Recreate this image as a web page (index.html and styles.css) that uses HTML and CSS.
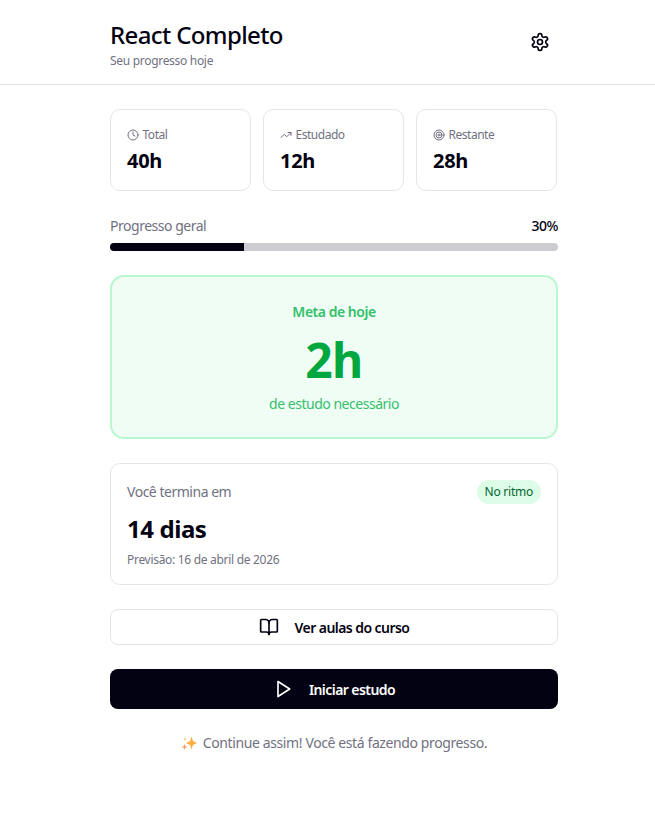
FILE: index.html
```html
<!DOCTYPE html>
<html lang="pt-BR">
<head>
    <title>React Completo</title>
    <meta name="viewport" content="width=device-width, initial-scale=1.0">
    <link rel="stylesheet" href="styles.css">
</head>
<body>
    <header class="header">
        <div class="header-inner">
            <div>
                <h1>React Completo</h1>
                <p class="subtitle">Seu progresso hoje</p>
            </div>
            <button class="icon-btn" aria-label="Configurações">
                <svg width="20" height="20" viewBox="0 0 24 24" class="icon">
                    <path d="M12.22 2h-.44a2 2 0 0 0-2 2v.18a2 2 0 0 1-1 1.73l-.43.25a2 2 0 0 1-2 0l-.15-.08a2 2 0 0 0-2.73.73l-.22.38a2 2 0 0 0 .73 2.73l.15.1a2 2 0 0 1 1 1.72v.51a2 2 0 0 1-1 1.74l-.15.09a2 2 0 0 0-.73 2.73l.22.38a2 2 0 0 0 2.73.73l.15-.08a2 2 0 0 1 2 0l.43.25a2 2 0 0 1 1 1.73V20a2 2 0 0 0 2 2h.44a2 2 0 0 0 2-2v-.18a2 2 0 0 1 1-1.73l.43-.25a2 2 0 0 1 2 0l.15.08a2 2 0 0 0 2.73-.73l.22-.39a2 2 0 0 0-.73-2.73l-.15-.08a2 2 0 0 1-1-1.74v-.5a2 2 0 0 1 1-1.74l.15-.09a2 2 0 0 0 .73-2.73l-.22-.38a2 2 0 0 0-2.73-.73l-.15.08a2 2 0 0 1-2 0l-.43-.25a2 2 0 0 1-1-1.73V4a2 2 0 0 0-2-2z"/>
                    <circle cx="12" cy="12" r="3"/>
                </svg>
            </button>
        </div>
    </header>

    <main class="container">
        <div class="stats">
            <div class="card stat">
                <div class="stat-label">
                    <svg width="12" height="12" viewBox="0 0 24 24" class="icon">
                        <circle cx="12" cy="12" r="10"/>
                        <path d="M12 6v6l4 2"/>
                    </svg>
                    <span>Total</span>
                </div>
                <div class="stat-value">40h</div>
            </div>
            <div class="card stat">
                <div class="stat-label">
                    <svg width="12" height="12" viewBox="0 0 24 24" class="icon">
                        <path d="M22 7l-8.500 8.500-5-5L2 17"/>
                        <path d="M16 7h6v6"/>
                    </svg>
                    <span>Estudado</span>
                </div>
                <div class="stat-value">12h</div>
            </div>
            <div class="card stat">
                <div class="stat-label">
                    <svg width="12" height="12" viewBox="0 0 24 24" class="icon">
                        <circle cx="12" cy="12" r="10"/>
                        <circle cx="12" cy="12" r="6"/>
                        <circle cx="12" cy="12" r="2"/>
                    </svg>
                    <span>Restante</span>
                </div>
                <div class="stat-value">28h</div>
            </div>
        </div>

        <section class="progress">
            <div class="progress-head">
                <span class="progress-label">Progresso geral</span>
                <span class="progress-value">30%</span>
            </div>
            <div class="bar"><div class="bar-fill" style="width: 30%"></div></div>
        </section>

        <section class="goal">
            <p class="goal-title">Meta de hoje</p>
            <p class="goal-value">2h</p>
            <p class="goal-note">de estudo necessário</p>
        </section>

        <section class="card finish">
            <div class="finish-head">
                <span class="finish-label">Você termina em</span>
                <span class="badge">No ritmo</span>
            </div>
            <div class="finish-value">14 dias</div>
            <p class="finish-date">Previsão: 16 de abril de 2026</p>
        </section>

        <button class="btn btn-outline">
            <svg width="20" height="20" viewBox="0 0 24 24" class="icon">
                <path d="M12 7v14"/>
                <path d="M3 18a1 1 0 0 1-1-1V4a1 1 0 0 1 1-1h5a4 4 0 0 1 4 4 4 4 0 0 1 4-4h5a1 1 0 0 1 1 1v13a1 1 0 0 1-1 1h-6a3 3 0 0 0-3 3 3 3 0 0 0-3-3z"/>
            </svg>
            <span>Ver aulas do curso</span>
        </button>

        <button class="btn btn-dark">
            <svg width="20" height="20" viewBox="0 0 24 24" class="icon">
                <path d="M6 3l14 9-14 9z"/>
            </svg>
            <span>Iniciar estudo</span>
        </button>

        <p class="footer-note">
            <svg width="16" height="16" viewBox="0 0 16 16" class="sparkle">
                <path fill="#fbb040" d="M10.500 1.500l1.500 4.500 4 2-4 2-1.500 4.500-1.500-4.500-4-2 4-2z"/>
                <path fill="#f79a5e" d="M3.500 9l.8 2.200 2.200.8-2.200.8-.8 2.200-.8-2.200-2.200-.8 2.200-.8z"/>
                <path fill="#fbc57a" d="M4 2l.6 1.400 1.400.6-1.400.6-.6 1.400-.6-1.400-1.400-.6 1.400-.6z"/>
            </svg>
            <span>Continue assim! Você está fazendo progresso.</span>
        </p>
    </main>
</body>
</html>
```

FILE: styles.css
```css
* {
    box-sizing: border-box;
}

body {
    font-family: "Noto Sans", sans-serif;
    margin: 0;
    background: #fff;
    color: #030213;
    letter-spacing: -0.03em;
}

p,
h1 {
    margin: 0;
}

.icon {
    fill: none;
    stroke: currentColor;
    stroke-width: 2;
    stroke-linecap: round;
    stroke-linejoin: round;
    flex-shrink: 0;
}

.header {
    height: 85px;
    padding-top: 17px;
    border-bottom: 1px solid #e5e5e5;
}

.header-inner {
    display: flex;
    justify-content: space-between;
    align-items: center;
    width: 448px;
    margin-left: 110px;
}

h1 {
    font-size: 24px;
    line-height: 36px;
    font-weight: 500;
    letter-spacing: -0.026em;
}

.subtitle {
    font-size: 12px;
    line-height: 16px;
    letter-spacing: -0.025em;
    color: #717182;
}

.icon-btn {
    display: flex;
    align-items: center;
    justify-content: center;
    width: 36px;
    height: 36px;
    padding: 0;
    border: none;
    background: none;
    color: #030213;
    position: relative;
    top: -1px;
}

.container {
    width: 448px;
    margin-left: 110px;
    padding-top: 24px;
}

.card {
    background: #fff;
    border: 1px solid #e5e5e5;
    border-radius: 10px;
}

.stats {
    display: grid;
    grid-template-columns: repeat(3, 141px);
    gap: 12px;
    margin-bottom: 24px;
}

.stat {
    height: 82px;
    padding: 16px;
}

.stat-label {
    display: flex;
    align-items: center;
    gap: 3.500px;
    font-size: 12px;
    line-height: 18px;
    color: #717182;
}

.stat-value {
    margin-top: 3px;
    font-size: 20px;
    line-height: 28px;
    font-weight: 700;
    letter-spacing: -0.015em;
}

.progress {
    margin-bottom: 24px;
}

.progress-head {
    display: flex;
    justify-content: space-between;
    align-items: center;
    padding-top: 1px;
    font-size: 14px;
    line-height: 20px;
    margin-bottom: 7px;
}

.progress-label {
    color: #717182;
}

.progress-value {
    font-weight: 500;
}

.bar {
    height: 8px;
    border-radius: 999px;
    background: #cbcbd0;
    overflow: hidden;
}

.bar-fill {
    height: 100%;
    background: #030213;
}

.goal {
    height: 164px;
    padding: 23px 24px;
    margin-bottom: 24px;
    background: #f0fdf4;
    border: 2px solid #b9f8cf;
    border-radius: 14px;
    text-align: center;
}

.goal-title {
    margin-top: 2px;
    font-size: 14px;
    line-height: 20px;
    font-weight: 600;
    color: #34c06c;
}

.goal-value {
    margin-top: 8px;
    font-size: 48px;
    line-height: 60px;
    font-weight: 700;
    color: #00a63e;
    letter-spacing: -0.01em;
}

.goal-note {
    margin-top: 4px;
    font-size: 14px;
    line-height: 20px;
    color: #34c06c;
}

.finish {
    height: 122px;
    padding: 16px;
    margin-bottom: 24px;
}

.finish-head {
    display: flex;
    justify-content: space-between;
    align-items: center;
    margin-bottom: 9px;
}

.finish-label {
    font-size: 14px;
    line-height: 20px;
    color: #717182;
}

.badge {
    padding: 2px 8px;
    border-radius: 999px;
    background: #dcfce7;
    color: #016630;
    font-size: 12px;
    line-height: 20px;
    letter-spacing: -0.02em;
}

.finish-value {
    font-size: 24px;
    line-height: 32px;
    font-weight: 700;
    letter-spacing: -0.018em;
}

.finish-date {
    margin-top: 7px;
    font-size: 12px;
    line-height: 16px;
    letter-spacing: -0.025em;
    color: #717182;
}

.btn {
    display: flex;
    align-items: center;
    justify-content: center;
    gap: 16px;
    width: 100%;
    margin-bottom: 24px;
    padding: 0;
    font-family: inherit;
    font-size: 14px;
    font-weight: 600;
    letter-spacing: -0.04em;
    border-radius: 8px;
}

.btn-outline {
    height: 36px;
    background: #fff;
    border: 1px solid #e5e5e5;
    color: #030213;
}

.btn-dark {
    height: 40px;
    background: #030213;
    border: none;
    color: #fff;
}

.footer-note {
    display: flex;
    align-items: center;
    justify-content: center;
    gap: 6px;
    font-size: 14px;
    line-height: 20px;
    letter-spacing: -0.028em;
    color: #717182;
}

.sparkle {
    flex-shrink: 0;
}
```
